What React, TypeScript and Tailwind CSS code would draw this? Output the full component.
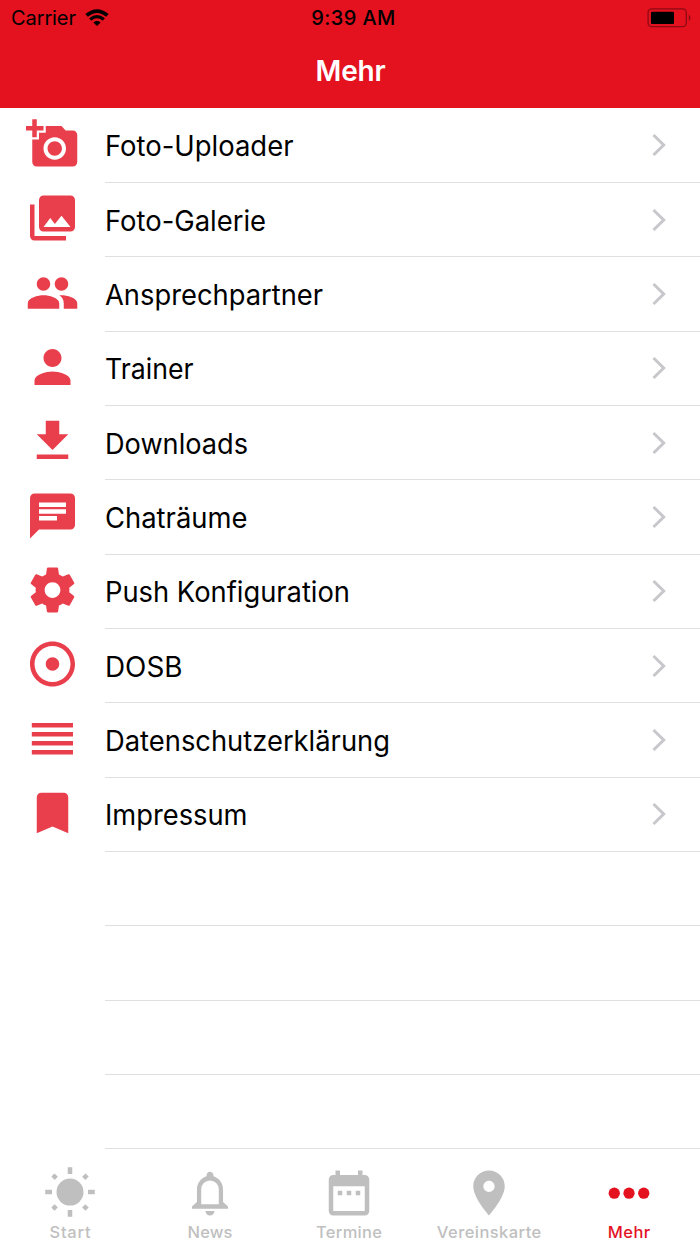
import React from "react";

const rows = [
  { label: "Foto-Uploader", w: 188.5, d: "M3 4V1h2v3h3v2H5v3H3V6H0V4h3zm3 6V7h3V4h7l1.83 2H21c1.1 0 2 .9 2 2v12c0 1.1-.9 2-2 2H5c-1.1 0-2-.9-2-2V10h3zm7 9c2.76 0 5-2.24 5-5s-2.24-5-5-5-5 2.24-5 5 2.24 5 5 5zm-3.2-5c0 1.77 1.43 3.2 3.2 3.2s3.2-1.43 3.2-3.2-1.43-3.2-3.2-3.2-3.2 1.43-3.2 3.2z" },
  { label: "Foto-Galerie", w: 161, d: "M22 16V4c0-1.1-.9-2-2-2H8c-1.1 0-2 .9-2 2v12c0 1.1.9 2 2 2h12c1.1 0 2-.9 2-2zm-11-4l2.03 2.71L16 11l4 5H8l3-4zM2 6v14c0 1.1.9 2 2 2h14v-2H4V6H2z" },
  { label: "Ansprechpartner", w: 218, d: "M16 11c1.66 0 2.99-1.34 2.99-3S17.66 5 16 5c-1.66 0-3 1.34-3 3s1.34 3 3 3zm-8 0c1.66 0 2.99-1.34 2.99-3S9.66 5 8 5C6.34 5 5 6.34 5 8s1.34 3 3 3zm0 2c-2.33 0-7 1.17-7 3.5V19h14v-2.5c0-2.33-4.67-3.5-7-3.5zm8 0c-.29 0-.62.02-.97.05 1.16.84 1.97 1.97 1.97 3.45V19h6v-2.5c0-2.33-4.67-3.5-7-3.5z" },
  { label: "Trainer", w: 88.5, d: "M12 12c2.21 0 4-1.79 4-4s-1.79-4-4-4-4 1.79-4 4 1.79 4 4 4zm0 2c-2.67 0-8 1.34-8 4v2h16v-2c0-2.66-5.33-4-8-4z" },
  { label: "Downloads", w: 143, d: "M19 9h-4V3H9v6H5l7 7 7-7zM5 18v2h14v-2H5z" },
  { label: "Chaträume", w: 142.5, d: "M20 2H4c-1.1 0-1.99.9-1.99 2L2 22l4-4h14c1.1 0 2-.9 2-2V4c0-1.1-.9-2-2-2zM6 9h12v2H6V9zm8 5H6v-2h8v2zm4-6H6V6h12v2z" },
  { label: "Push Konfiguration", w: 245, d: "M19.43 12.98c.04-.32.07-.64.07-.98s-.03-.66-.07-.98l2.11-1.65c.19-.15.24-.42.12-.64l-2-3.46c-.12-.22-.39-.3-.61-.22l-2.49 1c-.52-.4-1.08-.73-1.69-.98l-.38-2.65C14.46 2.18 14.25 2 14 2h-4c-.25 0-.46.18-.49.42l-.38 2.65c-.61.25-1.17.59-1.69.98l-2.49-1c-.23-.09-.49 0-.61.22l-2 3.46c-.13.22-.07.49.12.64l2.11 1.65c-.04.32-.07.65-.07.98s.03.66.07.98l-2.11 1.65c-.19.15-.24.42-.12.64l2 3.46c.12.22.39.3.61.22l2.49-1c.52.4 1.08.73 1.69.98l.38 2.65c.03.24.24.42.49.42h4c.25 0 .46-.18.49-.42l.38-2.65c.61-.25 1.17-.59 1.69-.98l2.49 1c.23.09.49 0 .61-.22l2-3.46c.12-.22.07-.49-.12-.64l-2.11-1.65zM12 15.5c-1.93 0-3.5-1.57-3.5-3.5s1.57-3.5 3.5-3.5 3.5 1.57 3.5 3.5-1.57 3.5-3.5 3.5z" },
  { label: "DOSB", w: 77.5, d: "M12 2C6.49 2 2 6.49 2 12s4.49 10 10 10 10-4.49 10-10S17.51 2 12 2zm0 18c-4.41 0-8-3.59-8-8s3.59-8 8-8 8 3.59 8 8-3.59 8-8 8zm3-8c0 1.66-1.34 3-3 3s-3-1.34-3-3 1.34-3 3-3 3 1.34 3 3z" },
  { label: "Datenschutzerklärung", w: 285, d: "M2.8 4.9h18.3v2H2.8zM2.8 8.9h18.3v2H2.8zM2.8 12.9h18.3v2H2.8zM2.8 16.9h18.3v2H2.8z" },
  { label: "Impressum", w: 142.5, d: "M17 3H7c-1.1 0-1.99.9-1.99 2L5 21l7-3 7 3V5c0-1.1-.9-2-2-2z" },
];

const icon = {
  sun: (
    <g>
      <circle cx="12" cy="11.6" r="6" />
      <path
        d="M12 .6v3M12 19.6v3M1 11.6h3M20 11.6h3M5.9 5.5L4.4 4M18.1 5.5L19.6 4M5.9 17.7L4.4 19.2M18.1 17.7l1.5 1.5"
        stroke="currentColor"
        strokeWidth="2"
      />
    </g>
  ),
  bell: (
    <path
      fillRule="evenodd"
      d="M12 22c1.1 0 2-.9 2-2h-4c0 1.1.9 2 2 2zm5.8-6v-5.5c0-3-1.7-5.2-4.3-6V4c0-.83-.67-1.5-1.5-1.5s-1.5.67-1.5 1.5v.5c-2.6.8-4.3 3-4.3 6V16L4 18v1h16v-1zM15.9 17H8.1v-6.7a3.9 3.9 0 0 1 7.8 0z"
    />
  ),
  calendar: (
    <path d="M9 11H7v2h2v-2zm4 0h-2v2h2v-2zm4 0h-2v2h2v-2zm2-7h-1V2h-2v2H8V2H6v2H5c-1.11 0-1.99.9-1.99 2L3 20c0 1.1.89 2 2 2h14c1.1 0 2-.9 2-2V6c0-1.1-.9-2-2-2zm0 16H5V9h14v11z" />
  ),
  pin: (
    <path d="M12 2C8.13 2 5 5.13 5 9c0 5.25 7 13 7 13s7-7.75 7-13c0-3.87-3.13-7-7-7zm0 9.5c-1.38 0-2.5-1.12-2.5-2.5s1.12-2.5 2.5-2.5 2.5 1.12 2.5 2.5-1.12 2.5-2.5 2.5z" />
  ),
  dots: (
    <g>
      <circle cx="5.45" cy="12.1" r="2.5" />
      <circle cx="12" cy="12.1" r="2.5" />
      <circle cx="18.55" cy="12.1" r="2.5" />
    </g>
  ),
};

const tabs = [
  { label: "Start", icon: icon.sun, w: 41 },
  { label: "News", icon: icon.bell, w: 45 },
  { label: "Termine", icon: icon.calendar, w: 66 },
  { label: "Vereinskarte", icon: icon.pin, w: 104.5 },
  { label: "Mehr", icon: icon.dots, w: 42.5, active: true },
];

export default function App() {
  return (
    <div className="flex h-[1244px] w-[700px] flex-col overflow-hidden bg-white font-[Inter,sans-serif]">
      <header className="flex h-[108.67px] shrink-0 flex-col">
        <div className="flex h-[108px] flex-col bg-[#e4111f]">
          <div className="grid h-9 grid-cols-3 items-center pl-[11px] pr-[9px] text-black">
            <div className="flex items-center gap-[9px]">
              <span className="text-[20px] leading-6 tracking-[-0.1px]">Carrier</span>
              <svg width="24" height="18" viewBox="0 0 24 18">
                <path d="M1.6 6.4Q12-2.2 22.4 6.4" fill="none" stroke="#000" strokeWidth="3.8" />
                <path d="M5.2 10.4Q12 4.8 18.8 10.4" fill="none" stroke="#000" strokeWidth="3.2" />
                <path d="M8.4 13.4Q12 10.6 15.6 13.4L12 17z" />
              </svg>
            </div>
            <span className="whitespace-nowrap pl-[5px] text-center text-[20px] font-medium leading-6 tracking-[0.4px]">9:39 AM</span>
            <svg className="justify-self-end" width="44" height="20" viewBox="0 0 44 20">
              <rect x="1.1" y="0.9" width="38.2" height="17.8" rx="3.6" fill="none" stroke="#8c0b14" strokeWidth="1.3" />
              <rect x="4" y="3.8" width="23" height="12.2" rx="1" />
              <path d="M41.8 6.4q3.4 3.2 0 6.6z" fill="#8c0b14" />
            </svg>
          </div>
          <h1 className="pl-px text-center text-[28px] font-semibold leading-[71px] tracking-[-0.2px] text-white">Mehr</h1>
        </div>
      </header>
      <main className="flex h-[1040.67px] shrink-0 flex-col">
        {rows.map((r) => (
          <div key={r.label} className="flex h-[74.33px] shrink-0">
            <div className="flex w-[105px] shrink-0 justify-center pt-[8.4px]">
              <svg width="54" height="54" viewBox="0.22 0 24 24" fill="#e93f4d">
                <path d={r.d} />
              </svg>
            </div>
            <div className="flex flex-1 items-center justify-between border-b border-[#dfdee0] pr-[33px]">
              <svg width="300" height="50" className="overflow-visible">
                <text x="0" y="35.6" fontSize="28" textLength={r.w} lengthAdjust="spacingAndGlyphs">{r.label}</text>
              </svg>
              <svg width="16" height="24" viewBox="0 0 16 24" fill="none" stroke="#c7c7cc" strokeWidth="3">
                <path d="M2.5 2l10.2 10L2.5 22" />
              </svg>
            </div>
          </div>
        ))}
        {[0, 1, 2, 3].map((n) => (
          <div key={n} className="ml-[105px] h-[74.33px] shrink-0 border-b border-[#dfdee0]" />
        ))}
      </main>
      <nav className="grid w-[699px] flex-1 grid-cols-5">
        {tabs.map((t) => (
          <div key={t.label} className={t.active ? "flex flex-col items-center pt-[16.5px] text-[#e4111f]" : "flex flex-col items-center pt-[16.5px] text-[#bfbfbf]"}>
            <svg width="54" height="54" viewBox="0 0 24 24" fill="currentColor">{t.icon}</svg>
            <svg width="120" height="24" fill="currentColor">
              <text x="60" y="18" fontSize="16.5" fontWeight="500" textAnchor="middle" textLength={t.w} lengthAdjust="spacing">{t.label}</text>
            </svg>
          </div>
        ))}
      </nav>
    </div>
  );
}
